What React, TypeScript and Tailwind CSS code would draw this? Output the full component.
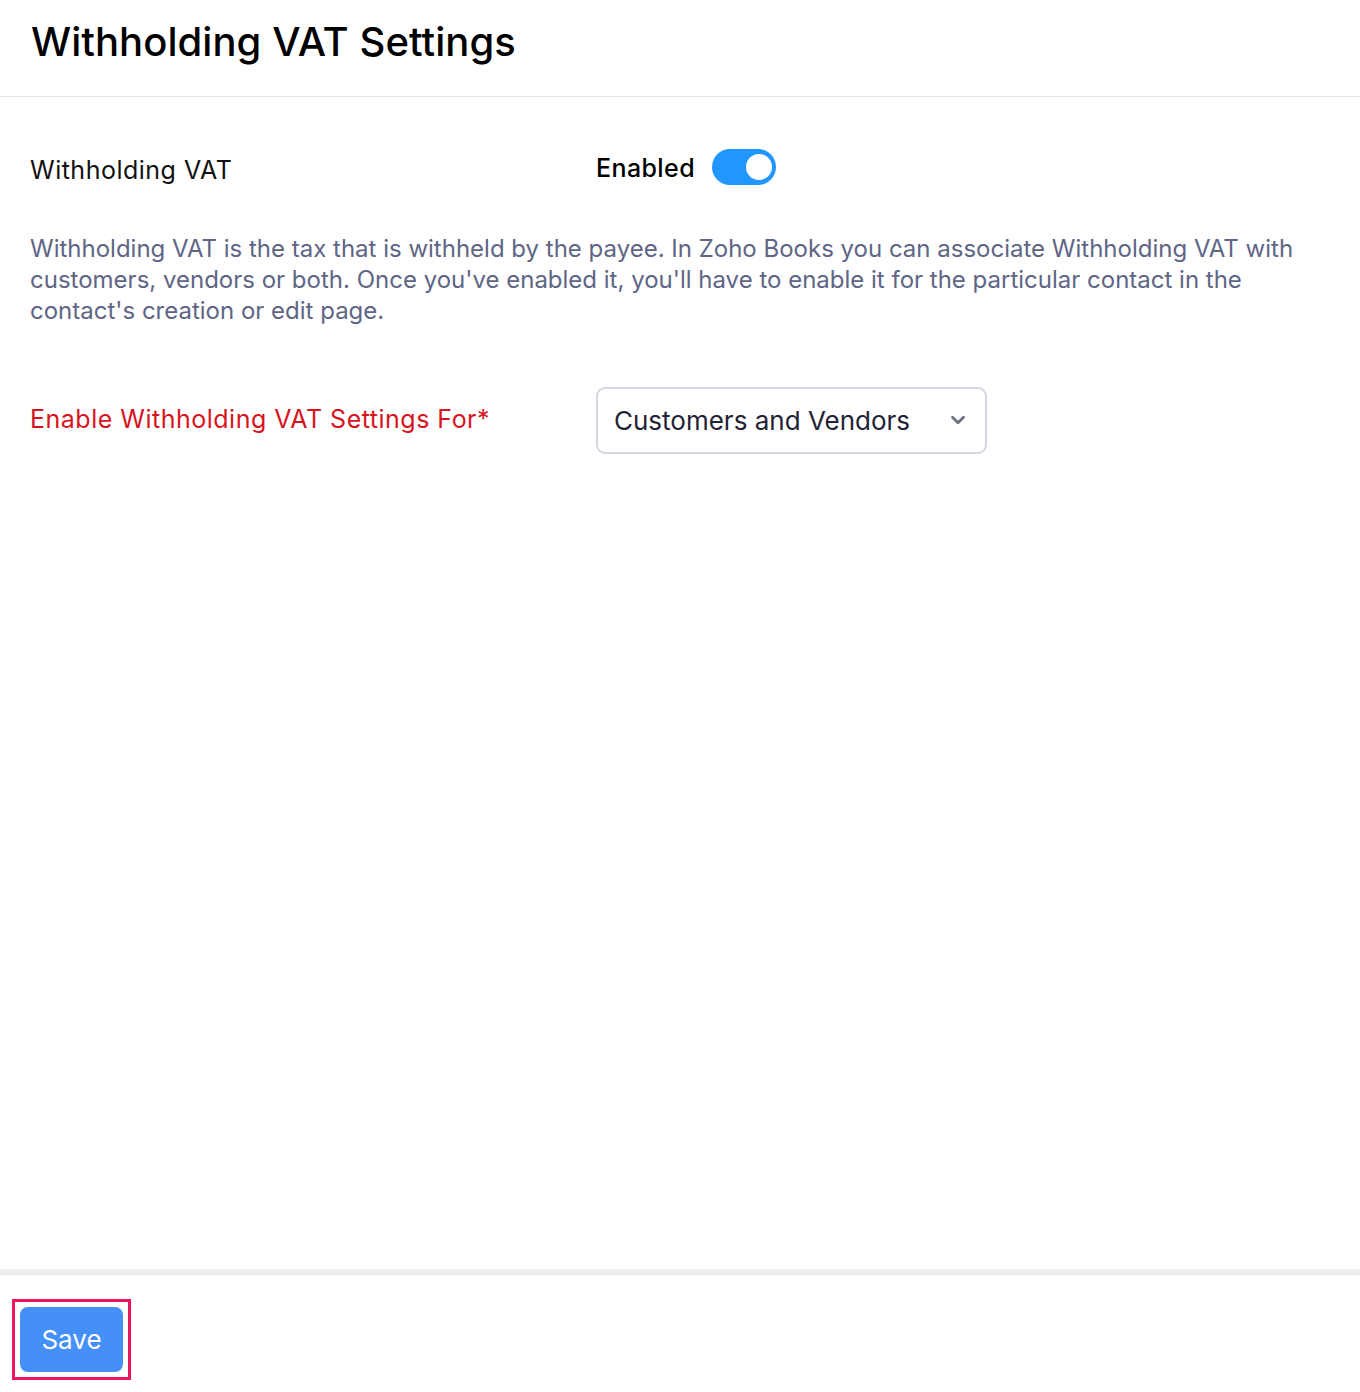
import React from "react";

export default function App() {
  return (
    <div className="flex h-[1392px] w-[1360px] flex-col bg-white text-[#111] [font-family:Inter,'Noto_Sans',sans-serif]">
      <div className="flex h-[97px] items-center border-b border-[#e6e6f0] px-[31px] pb-[12px]">
        <h1 className="text-[40px] font-medium tracking-[0.05px] text-black">Withholding VAT Settings</h1>
      </div>
      <div className="flex-1 px-[30px]">
        <div className="mt-[48px] flex items-center">
          <div className="w-[566px] pt-[7px] text-[25px] tracking-[0.5px] text-[#111]">Withholding VAT</div>
          <div className="flex items-center gap-[17px]">
            <span className="pt-[2px] text-[25px] font-medium tracking-[0.4px] text-black">Enabled</span>
            <div className="relative h-[36px] w-[64px] rounded-full bg-[#2196ff]">
              <div className="absolute right-[4px] top-[5px] h-[26px] w-[26px] rounded-full bg-white" />
            </div>
          </div>
        </div>
        <p className="mt-[43px] max-w-[1300px] text-[24px] leading-[31px] text-[#5e6585]">
          Withholding VAT is the tax that is withheld by the payee. In Zoho Books you can associate Withholding VAT with customers, vendors or both. Once you've enabled it, you'll have to enable it for the particular contact in the contact's creation or edit page.
        </p>
        <div className="mt-[61px] flex items-start">
          <div className="w-[566px] pt-[14px] text-[25px] tracking-[0.5px] text-[#d7141e]">Enable Withholding VAT Settings For*</div>
          <div className="flex h-[67px] w-[391px] items-center justify-between rounded-[9px] border-2 border-[#d6d6e0] pl-[16px] pr-[16px]">
            <span className="text-[26px] text-[#1f2335]">Customers and Vendors</span>
            <svg width="22" height="22" viewBox="0 0 24 24" fill="none" stroke="#6b6f85" strokeWidth="3" strokeLinecap="round" strokeLinejoin="round">
              <path d="M6 9l6 6 6-6" />
            </svg>
          </div>
        </div>
      </div>
      <div className="h-[6px] bg-gradient-to-b from-[#f4f4f4] to-[#e9e9e9]" />
      <div className="h-[117px] px-[12px] pt-[24px]">
        <div className="inline-block border-[3px] border-[#f0145a] p-[5px]">
          <button className="flex h-[65px] w-[103px] items-center justify-center rounded-[8px] bg-[#448ff8] text-[26px] text-white">
            Save
          </button>
        </div>
      </div>
    </div>
  );
}
